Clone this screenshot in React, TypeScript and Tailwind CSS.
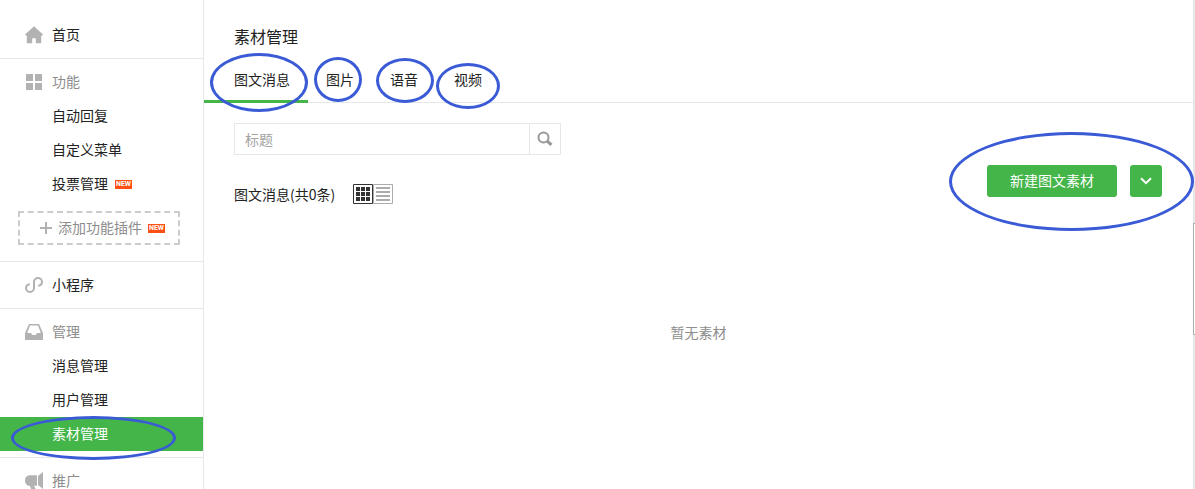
import type { ReactNode } from "react";

function Ring({ className }: { className: string }) {
  return (
    <span
      aria-hidden="true"
      className={`pointer-events-none absolute z-10 rounded-[50%] border-3 border-[#3a5bd5] ${className}`}
    />
  );
}

function NewBadge() {
  return (
    <span className="flex h-[9px] w-[17px] items-center justify-center bg-[#ff4f14] font-[Roboto,sans-serif] text-[7px] leading-[9px] font-bold text-white">
      NEW
    </span>
  );
}

const HomeIcon = () => (
  <svg width="18" height="18" viewBox="0 0 18 18" fill="#b2b2b2">
    <path d="M9 0.3 L18 8.6 L17.2 9.6 H16.2 V17.3 H10.8 V12.3 H7.2 V17.3 H1.8 V9.6 H0.8 L0 8.6 Z" />
  </svg>
);

const GridIcon = () => (
  <svg width="18" height="18" viewBox="0 0 18 18" fill="#b2b2b2">
    <path d="M1 1h7v7H1zM10 1h7v7h-7zM1 10h7v7H1zM10 10h7v7h-7z" />
  </svg>
);

const MiniProgramIcon = () => (
  <svg width="18" height="18" viewBox="0 0 18 18" fill="none" stroke="#b2b2b2" strokeWidth="2">
    <path d="M4.8 8.3 C2.6 8.6 1 10 1 12 C1 14.3 2.8 16 5 16 C7.2 16 9 14.3 9 12 V6 C9 3.7 10.8 2 13 2 C15.2 2 17 3.7 17 6 C17 8 15.4 9.4 13.2 9.7" />
  </svg>
);

const TrayIcon = () => (
  <svg width="18" height="18" viewBox="0 0 18 18">
    <path
      fill="#b2b2b2"
      fillRule="evenodd"
      d="M4 1H14L18 10V17H0V10ZM5 2.6L2.2 10H6C6.2 11.6 7.4 12 9 12C10.6 12 11.8 11.6 12 10H15.8L13 2.6Z"
    />
  </svg>
);

const HornIcon = () => (
  <svg width="18" height="18" viewBox="0 0 18 18" fill="#b2b2b2">
    <path d="M12 3.2V13.8H9L11 17.8H6.5L4.8 13.8C2 13.8 0 11.6 0 8.5C0 5.3 2 3.2 5 3.2ZM13 4L18 0V17L13 13Z" />
  </svg>
);

const SearchIcon = () => (
  <svg width="16" height="16" viewBox="0 0 16 16" fill="none" stroke="#999">
    <circle cx="6.5" cy="6.5" r="5" strokeWidth="2" />
    <path d="M10 9.8L14.4 13.9" strokeWidth="3.2" />
  </svg>
);

const Heading = ({ icon, label, dark }: { icon: ReactNode; label: string; dark?: boolean }) => (
  <h2 className={`flex h-[34px] items-center gap-[9px] pl-[25px] text-sm ${dark ? "text-[#222]" : "text-[#8d8d8d]"}`}>
    {icon}
    <span className="pb-[2px]">{dark ? <a href="#">{label}</a> : label}</span>
  </h2>
);

function Item({ label, isNew, active }: { label: string; isNew?: boolean; active?: boolean }) {
  return (
    <li className="relative">
      <a
        href="#"
        className={`flex h-[34px] items-center gap-[7px] pl-[52px] ${active ? "bg-[#44b549] text-white" : "text-[#222]"}`}
      >
        <span className="pb-[2px]">{label}</span>
        {isNew && <NewBadge />}
      </a>
      {active && <Ring className="-top-px left-[11px] h-[44px] w-[165px]" />}
    </li>
  );
}

const section = "border-t border-[#e7e7eb] py-[6px]";

const tabs = [
  { label: "图文消息", ring: "-top-[5px] left-[6px] h-[59px] w-[98px]" },
  { label: "图片", ring: "-top-px left-[6px] h-[45px] w-[48px]" },
  { label: "语音", ring: "top-0 left-[4px] h-[45px] w-[58px]" },
  { label: "视频", ring: "top-[5px] left-0 h-[46px] w-[64px]" },
];

export default function App() {
  return (
    <div className="flex h-screen min-w-[900px] overflow-hidden bg-white font-['Noto_Sans_CJK_SC',sans-serif] text-sm text-[#222]">
      <nav className="w-[204px] shrink-0 border-r border-[#e7e7eb] pt-[18px]">
        <div className="pb-[6px]">
          <Heading icon={<HomeIcon />} label="首页" dark />
        </div>
        <div className={section}>
          <Heading icon={<GridIcon />} label="功能" />
          <ul>
            <Item label="自动回复" />
            <Item label="自定义菜单" />
            <Item label="投票管理" isNew />
          </ul>
          <a
            href="#"
            className="mx-[18px] mt-[10px] mb-[10px] flex h-[34px] w-[162px] items-center gap-[6px] border-2 border-dashed border-[#ccc] pl-[20px] text-[#8d8d8d]"
          >
            <svg width="12" height="12" viewBox="0 0 12 12" stroke="#b2b2b2" strokeWidth="2">
              <path d="M6 0V12M0 6H12" />
            </svg>
            <span className="pb-[2px]">添加功能插件</span>
            <NewBadge />
          </a>
        </div>
        <div className={section}>
          <Heading icon={<MiniProgramIcon />} label="小程序" dark />
        </div>
        <div className={section}>
          <Heading icon={<TrayIcon />} label="管理" />
          <ul>
            <Item label="消息管理" />
            <Item label="用户管理" />
            <Item label="素材管理" active />
          </ul>
        </div>
        <div className={section}>
          <Heading icon={<HornIcon />} label="推广" />
        </div>
      </nav>

      <main className="flex min-w-0 flex-1 flex-col">
        <header className="border-b border-[#e7e7eb] pt-[24px]">
          <h1 className="pl-[30px] text-base leading-6">素材管理</h1>
          <ul className="mt-[10px] -mb-px flex">
            {tabs.map((tab, i) => (
              <li key={tab.label} className="relative">
                <a
                  href="#"
                  className={`flex h-[45px] items-center border-b-3 pr-[18px] ${
                    i === 0 ? "border-[#44b549] pl-[30px]" : "border-transparent pl-[18px]"
                  }`}
                >
                  {tab.label}
                </a>
                <Ring className={tab.ring} />
              </li>
            ))}
          </ul>
        </header>

        <div className="flex items-start justify-between pt-[20px] pr-[31px] pl-[30px]">
          <div>
            <form className="flex h-[32px] w-[327px] border border-[#e7e7eb]">
              <input
                type="text"
                aria-label="标题"
                placeholder="标题"
                className="min-w-0 flex-1 px-[10px] outline-none placeholder:text-[#a3a3a3]"
              />
              <button
                type="button"
                aria-label="搜索"
                className="flex w-[31px] items-center justify-center border-l border-[#e7e7eb]"
              >
                <SearchIcon />
              </button>
            </form>
            <div className="mt-[29px] flex h-[20px] items-center gap-[18px]">
              <p>图文消息(共0条)</p>
              <div className="flex">
                <button type="button" aria-label="卡片视图">
                  <svg className="block" width="20" height="20" viewBox="0 0 20 20">
                    <path d="M.5 .5H19.5V19.5H.5Z" fill="none" stroke="#333" />
                    <path
                      fill="#333"
                      d="M3 3h4v4H3zM8 3h4v4H8zM13 3h4v4h-4zM3 8h4v4H3zM8 8h4v4H8zM13 8h4v4h-4zM3 13h4v4H3zM8 13h4v4H8zM13 13h4v4h-4z"
                    />
                  </svg>
                </button>
                <button type="button" aria-label="列表视图">
                  <svg className="block" width="20" height="20" viewBox="0 0 20 20">
                    <path d="M.5 .5H19.5V19.5H.5Z" fill="none" stroke="#acacac" />
                    <path fill="#acacac" d="M3 3h14v2H3zM3 7h14v2H3zM3 11h14v2H3zM3 15h14v2H3z" />
                  </svg>
                </button>
              </div>
            </div>
          </div>

          <div className="relative mt-[42px] flex gap-[13px]">
            <button type="button" className="h-[32px] w-[130px] rounded-[3px] bg-[#44b549] pb-[2px] text-white">
              新建图文素材
            </button>
            <button
              type="button"
              aria-label="更多"
              className="flex size-[32px] items-center justify-center rounded-[3px] bg-[#44b549]"
            >
              <svg width="12" height="8" viewBox="0 0 12 8" fill="none" stroke="#fff" strokeWidth="2">
                <path d="M1 1.2L6 6.2L11 1.2" />
              </svg>
            </button>
            <Ring className="-top-[33px] -left-[38px] h-[99px] w-[245px]" />
          </div>
        </div>

        <p className="mt-[117px] text-center leading-[22px] text-[#8d8d8d]">暂无素材</p>
      </main>

      <div className="flex w-[2px] shrink-0 flex-col bg-[#e7e7eb] pt-[223px]">
        <div className="h-[112px] border-y border-l border-[#adadad] bg-white" />
      </div>
    </div>
  );
}
